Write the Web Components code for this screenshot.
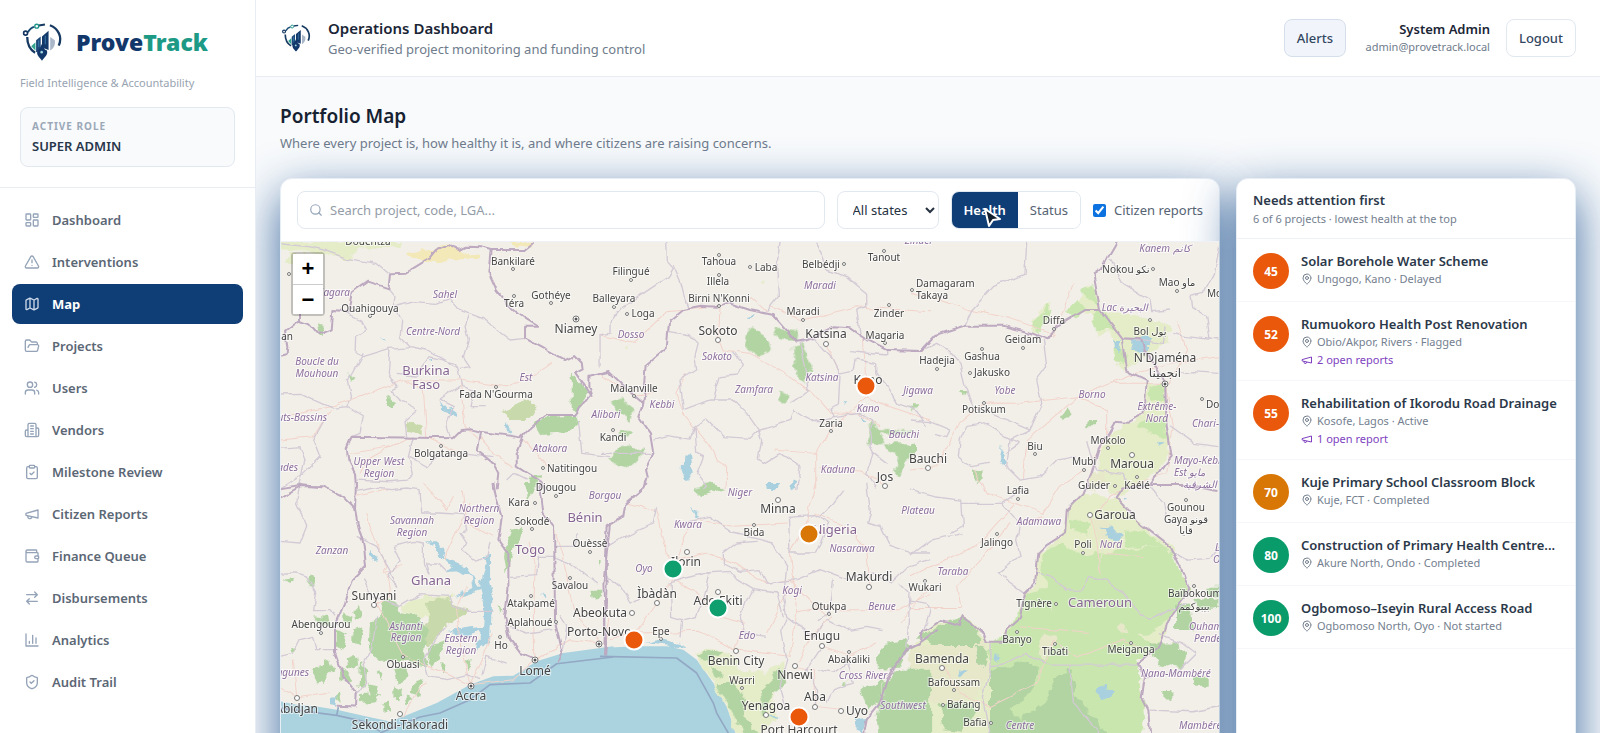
<!DOCTYPE html>
<html lang="en">
<head>
<meta charset="utf-8">
<title>ProveTrack – Portfolio Map</title>
<style>
  html, body { margin: 0; height: 100%; }
  body { font-family: "Noto Sans", "DejaVu Sans", sans-serif; font-size: 13px; color: #1e293b; background: #f8fafc; }
</style>
</head>
<body>
<pt-app></pt-app>

<script>
const ICONS = {
  dashboard: '<rect x="3" y="3" width="7" height="9" rx="1"/><rect x="14" y="3" width="7" height="5" rx="1"/><rect x="14" y="12" width="7" height="9" rx="1"/><rect x="3" y="16" width="7" height="5" rx="1"/>',
  alert: '<path d="m21.7 18-8-14a2 2 0 0 0-3.5 0l-8 14A2 2 0 0 0 4 21h16a2 2 0 0 0 1.7-3"/><path d="M12 9v4M12 17h.01"/>',
  map: '<path d="M14.1 5.6a2 2 0 0 0 1.8 0l3.7-1.9A1 1 0 0 1 21 4.6v12.8a1 1 0 0 1-.6.9l-4.5 2.2a2 2 0 0 1-1.8 0l-4.2-2.1a2 2 0 0 0-1.8 0l-3.7 1.9A1 1 0 0 1 3 19.4V6.6a1 1 0 0 1 .6-.9l4.5-2.2a2 2 0 0 1 1.8 0zM15 5.8v15M9 3.2v15"/>',
  folder: '<path d="m6 14 1.5-2.9A2 2 0 0 1 9.2 10H20a2 2 0 0 1 1.9 2.5l-1.5 6a2 2 0 0 1-2 1.5H4a2 2 0 0 1-2-2V5a2 2 0 0 1 2-2h3.9a2 2 0 0 1 1.7.9l.8 1.2a2 2 0 0 0 1.7.9H18a2 2 0 0 1 2 2v2"/>',
  users: '<path d="M16 21v-2a4 4 0 0 0-4-4H6a4 4 0 0 0-4 4v2"/><circle cx="9" cy="7" r="4"/><path d="M22 21v-2a4 4 0 0 0-3-3.9M16 3.1a4 4 0 0 1 0 7.8"/>',
  building: '<path d="M6 22V4a2 2 0 0 1 2-2h8a2 2 0 0 1 2 2v18zM6 12H4a2 2 0 0 0-2 2v6a2 2 0 0 0 2 2h2M18 9h2a2 2 0 0 1 2 2v9a2 2 0 0 1-2 2h-2M10 6h4M10 10h4M10 14h4M10 18h4"/>',
  clipboard: '<rect x="8" y="2" width="8" height="4" rx="1"/><path d="M16 4h2a2 2 0 0 1 2 2v14a2 2 0 0 1-2 2H6a2 2 0 0 1-2-2V6a2 2 0 0 1 2-2h2M9 14l2 2 4-4"/>',
  megaphone: '<path d="m3 11 18-5v12L3 14zM11.6 16.8a3 3 0 1 1-5.8-1.6"/>',
  wallet: '<path d="M19 7V4a1 1 0 0 0-1-1H5a2 2 0 0 0 0 4h15a1 1 0 0 1 1 1v4h-3a2 2 0 0 0 0 4h3a1 1 0 0 0 1-1v-2a1 1 0 0 0-1-1M3 5v14a2 2 0 0 0 2 2h15a1 1 0 0 0 1-1v-4"/>',
  swap: '<path d="m16 3 4 4-4 4M20 7H4M8 21l-4-4 4-4M4 17h16"/>',
  chart: '<path d="M3 3v18h18M18 17V9M13 17V5M8 17v-3"/>',
  shield: '<path d="M20 13c0 5-3.500 7.500-7.700 9a1 1 0 0 1-.7 0C7.500 20.500 4 18 4 13V6a1 1 0 0 1 1-1c2 0 4.500-1.200 6.200-2.700a1.200 1.200 0 0 1 1.500 0C14.500 3.800 17 5 19 5a1 1 0 0 1 1 1zM9 12l2 2 4-4"/>',
  search: '<circle cx="11" cy="11" r="8"/><path d="m21 21-4.300-4.300"/>',
  pin: '<path d="M20 10c0 5-5.500 10.200-7.400 11.800a1 1 0 0 1-1.200 0C9.500 20.200 4 15 4 10a8 8 0 0 1 16 0"/><circle cx="12" cy="10" r="3"/>'
};

function define(name, html, setup) {
  const template = document.createElement('template');
  template.innerHTML = html;
  customElements.define(name, class extends HTMLElement {
    connectedCallback() {
      if (this.shadowRoot) return;
      this.attachShadow({ mode: 'open' }).append(template.content.cloneNode(true));
      if (setup) setup(this, this.shadowRoot);
    }
  });
}

define('pt-icon', `
  <style>
    :host { display: inline-flex; flex: none; width: 16px; height: 16px; }
    svg { width: 100%; height: 100%; fill: none; stroke: currentColor; stroke-width: 2; stroke-linecap: round; stroke-linejoin: round; }
  </style>
  <svg viewBox="0 0 24 24" aria-hidden="true"></svg>`,
  (host, root) => { root.querySelector('svg').innerHTML = ICONS[host.getAttribute('name')]; });

define('pt-mark', `
  <style>:host { display: block; flex: none; } svg { display: block; width: 100%; height: 100%; }</style>
  <svg viewBox="60 62 134 130" fill="none" aria-hidden="true">
    <path d="M82 112C82 134 90 150 106 160" stroke="#173a63" stroke-width="7"/>
    <path d="M84 97C92 84 98 82 104 81" stroke="#1c4d74" stroke-width="6"/>
    <path d="M117 77L136 74" stroke="#173a63" stroke-width="6"/>
    <path d="M151 76C177 86 190 112 178 138" stroke="#173a63" stroke-width="7"/>
    <circle cx="77" cy="100" r="6" fill="#fff" stroke="#12365f" stroke-width="5"/>
    <circle cx="111" cy="79" r="6" fill="#fff" stroke="#1d9488" stroke-width="4"/>
    <path d="M94 140L107 128V153Z" fill="#2fa58f"/>
    <path d="M109 122L123 110V152L109 158Z" fill="#1d4a7a"/>
    <path d="M127 110L147 93V151L127 144Z" fill="#14396b"/>
    <path d="M152 112L166 122C168 134 164 146 152 153Z" fill="#a9b7c8"/>
    <path d="M127 184C118 172 109 167 113 153C121 149 122 140 127 132C132 140 132 149 142 153C146 166 136 172 127 184Z" fill="#12386b"/>
    <circle cx="126" cy="158" r="4" fill="#9fd3de"/>
    <path d="M137 108V134M117 122V142" stroke="#3b7cae" stroke-width="3"/>
  </svg>`);

define('pt-nav-item', `
  <style>
    :host { display: block; }
    a { display: flex; align-items: center; gap: 12px; height: 40px; padding: 0 12px; box-sizing: border-box; border-radius: 8px;
        color: #5b6775; font-weight: 600; text-decoration: none; }
    pt-icon { color: #94a3b8; }
    :host([active]) a { background: #0f3d75; color: #fff; font-weight: 700; }
    :host([active]) pt-icon { color: #cbd9ea; }
  </style>
  <a href="#"><slot></slot></a>`,
  (host, root) => {
    const link = root.querySelector('a');
    link.insertAdjacentHTML('afterbegin', `<pt-icon name="${host.getAttribute('icon')}"></pt-icon>`);
    if (host.hasAttribute('active')) link.setAttribute('aria-current', 'page');
  });

define('pt-sidebar', `
  <style>
    :host { display: block; position: relative; z-index: 2; background: #fff; border-right: 1px solid #e8edf3; }
    .top { padding: 20px; border-bottom: 1px solid #e8edf3; }
    .brand { display: flex; align-items: center; gap: 12px; height: 44px; }
    pt-mark { width: 44px; height: 44px; }
    .name { font-size: 23px; font-weight: 900; color: #12386b; }
    .name span { color: #1d9a86; }
    .tag { margin: 9px 0 14px; font-size: 11px; line-height: 20px; color: #98a3b1; white-space: nowrap; }
    .role { display: grid; gap: 4px; padding: 11px; border: 1px solid #e2e8f0; border-radius: 8px; background: #f8fafc; }
    .role small { font-size: 10px; line-height: 14px; font-weight: 700; letter-spacing: 1px; color: #9ba8b8; }
    .role b { font-size: 13px; line-height: 18px; font-weight: 600; color: #27364a; }
    nav { display: grid; gap: 2px; padding: 12px; }
  </style>
  <div class="top">
    <div class="brand"><pt-mark></pt-mark><div class="name">Prove<span>Track</span></div></div>
    <p class="tag">Field Intelligence &amp; Accountability</p>
    <div class="role"><small>ACTIVE ROLE</small><b>SUPER ADMIN</b></div>
  </div>
  <nav><slot></slot></nav>`);

define('pt-topbar', `
  <style>
    :host { display: flex; align-items: center; gap: 16px; height: 77px; padding: 0 24px; box-sizing: border-box;
            position: relative; z-index: 1; background: #fff; border-bottom: 1px solid #e8edf3; }
    pt-mark { width: 32px; height: 32px; }
    .title { flex: 1; }
    h1 { margin: 0; font-size: 15px; line-height: 22px; font-weight: 600; color: #1a2536; }
    p { margin: 0; font-size: 13px; line-height: 20px; color: #6f7c8c; }
    .user { min-width: 128px; text-align: right; }
    .user b { display: block; line-height: 18px; font-weight: 600; color: #1a2536; }
    .user span { display: block; font-size: 11px; line-height: 18px; color: #6f7c8c; }
    button { height: 38px; padding: 0 12px; border: 1px solid #e2e8f0; border-radius: 8px; background: #fff; font: inherit; font-weight: 500; color: #33475f; }
    .alerts { background: #f1f5fb; border-color: #d5dfeb; }
  </style>
  <pt-mark></pt-mark>
  <div class="title"><h1>Operations Dashboard</h1><p>Geo-verified project monitoring and funding control</p></div>
  <button class="alerts" type="button">Alerts</button>
  <div class="user"><b>System Admin</b><span>admin@provetrack.local</span></div>
  <button type="button">Logout</button>`);

define('pt-toolbar', `
  <style>
    :host { display: flex; align-items: center; gap: 12px; padding: 12px 16px; }
    .search { position: relative; flex: 1; display: flex; }
    .search pt-icon { position: absolute; left: 12px; top: 12px; width: 14px; height: 14px; color: #94a3b8; }
    input[type=search], select { font: inherit; height: 38px; box-sizing: border-box; border: 1px solid #e2e8f0; border-radius: 8px; background: #fff; }
    input[type=search] { width: 100%; padding: 0 12px 0 32px; }
    input::placeholder { color: #949ca8; }
    select { width: 102px; padding: 0 0 0 11px; color: #26323f; }
    .seg { display: flex; border: 1px solid #e2e8f0; border-radius: 8px; overflow: hidden; }
    .seg button { height: 36px; padding: 0 12px; border: 0; background: #fff; font: inherit; color: #566373; }
    .seg button[aria-pressed=true] { position: relative; background: #0f3d75; color: #fff; font-weight: 600; }
    .cursor { position: absolute; left: 32px; top: 16px; width: 17px; height: 20px; }
    label { display: flex; align-items: center; gap: 8px; color: #566373; white-space: nowrap; }
    label input { width: 13px; height: 13px; margin: 0; accent-color: #0b72e0; }
  </style>
  <div class="search"><pt-icon name="search"></pt-icon><input type="search" aria-label="Search projects" placeholder="Search project, code, LGA..."></div>
  <select aria-label="State"><option>All states</option></select>
  <div class="seg">
    <button type="button" aria-pressed="true">Health<svg class="cursor" viewBox="0 0 17 20" aria-hidden="true"><path d="M1 1L5 18L9 12L16 11Z" fill="#15202e" stroke="#fff" stroke-width="2" stroke-linejoin="round"/></svg></button>
    <button type="button" aria-pressed="false">Status</button>
  </div>
  <label><input type="checkbox" checked>Citizen reports</label>`);

/* Place names: kind, x, baseline y, text, anchor (m = middle, s = start, e = end).
   t = town, c = city, r = region, n = country. */
const PLACES = `t|232|23|Bankilaré
t|270|57|Gothéye
t|233|65|Téra
c|295|91|Niamey
t|89|70|Ouahigouya
r|164|56|Sahel
r|152|93|Centre-Nord
r|36|123|Boucle du
r|36|135|Mouhoun
n|145|133|Burkina
n|145|147|Faso
r|245|139|Est
t|215|156|Fada N'Gourma
r|46|179|Hauts-Bassins|e
r|69|54|Bandiagara|e
t|87|3|Douentza
t|12|98|San|e
r|325|176|Alibori
t|332|199|Kandi
t|160|215|Bolgatanga
r|98|223|Upper West
r|98|235|Region
r|269|210|Atakora
t|291|230|Natitingou
t|275|249|Djougou
r|17|229|Cascades|e
t|333|60|Balleyara
r|324|257|Borgou
t|238|264|Kara
t|251|283|Sokodé
r|198|270|Northern
r|198|282|Region
r|131|282|Savannah
r|131|294|Region
n|304|280|Bénin
n|249|312|Togo
t|309|305|Ouèssè
r|51|312|Zanzan
n|150|343|Ghana
t|289|347|Savalou
c|93|358|Sunyani
t|250|365|Atakpamé
c|319|375|Abeokuta
t|249|384|Aplahoué
c|286|394|Porto-Novo|s
t|40|386|Abengourou
r|125|388|Ashanti
r|125|399|Region
r|180|400|Eastern
r|180|412|Region
t|220|407|Ho
t|122|426|Obuasi
c|254|433|Lomé
r|28|434|Lagunes|e
c|190|458|Accra
c|37|471|Abidjan|e
c|119|487|Sekondi-Takoradi
t|350|33|Filingué
t|438|23|Tahoua
t|485|29|Laba
t|437|43|Illela
t|438|60|Birni N'Konni
t|362|75|Loga
t|540|26|Belbédji
t|603|19|Tanout
r|539|47|Maradi
t|522|73|Maradi
t|608|75|Zinder
r|638|2|Zinder
t|635|45|Damagaram|s
t|635|57|Takaya|s
r|350|96|Dosso
c|437|93|Sokoto
c|545|96|Katsina
t|604|97|Magaria
r|436|118|Sokoto
t|353|150|Malanville
r|381|166|Kebbi
r|473|151|Zamfara
r|541|139|Katsina
c|587|142|Kano
r|587|170|Kano
r|637|152|Jigawa
t|550|185|Zaria
r|623|196|Bauchi
c|647|221|Bauchi
r|557|231|Kaduna
c|604|239|Jos
t|656|122|Hadejia
r|459|254|Niger
c|497|271|Minna
r|637|272|Plateau
r|407|286|Kwara
t|473|294|Bida
n|576|292|Nigeria|e
r|571|310|Nasarawa
c|420|324|Ilorin|e
r|363|330|Oyo
c|376|356|Ìbàdàn
c|588|339|Makurdi
t|644|349|Wukari
r|511|352|Kogi
c|437|363|Ado Ekiti
t|548|368|Otukpa
r|601|368|Benue
t|380|393|Epe
r|466|397|Edo
c|541|398|Enugu
c|455|423|Benin City
t|568|421|Abakaliki
t|461|442|Warri
c|514|437|Nnewi
r|582|437|Cross River
c|534|459|Aba
c|485|468|Yenagoa
c|576|473|Uyo
c|518|492|Port Harcourt
r|622|467|Southwest
c|661|421|Bamenda
r|884|10|Kanem كانم
t|845|31|Nokou نكو
t|896|44|Mao ماو
t|926|55|Moussoro|s
r|844|69|Lac البحيرة
t|773|82|Diffa
t|869|93|Bol بول
t|742|101|Geidam
c|884|120|N'Djaména
c|884|135|انجمينا
t|701|118|Gashua
t|711|134|Jakusko
r|724|152|Yobe
r|811|156|Borno
t|703|171|Potiskum
r|876|168|Extrême-
r|876|180|Nord
t|925|166|Dourbali|s
r|911|185|Chari-|s
t|827|202|Mokolo
t|754|208|Biu
c|851|226|Maroua
t|803|223|Mubi
r|893|222|Mayo-Kebbi|s
r|893|234|Est مايو|s
r|919|246|الشرقية
t|813|247|Guider
t|856|247|Kaélé
t|737|252|Lafia
t|905|269|Gounou
t|905|281|Gaya قونو
t|905|292|قايا
c|834|277|Garoua
r|758|283|Adamawa
t|716|304|Jalingo
t|802|306|Poli
r|830|306|Nord
r|934|309|Logone|s
r|932|321|Oriental|s
r|672|333|Taraba
t|753|365|Tignère
n|819|365|Cameroun
t|887|355|Baïbokoum|s
t|913|368|بيبوكمم
r|908|388|Ouham-|s
r|913|400|Pendé|s
t|736|401|Banyo
t|774|413|Tibati
t|850|411|Meiganga
r|860|435|Nana-Mambéré|s
t|673|444|Bafoussam
t|666|466|Bafang|s
t|694|484|Bafia
r|739|487|Centre
r|898|487|Mambéré|s`.split('\n').map(row => row.split('|'));

const TOWNS = '232,27 270,61 233,54 89,74 215,145 332,188 160,204 262,226 275,254 333,65 254,261 251,287 309,310 289,336 250,354 275,380 40,391 219,395 122,415 350,38 438,13 469,25 438,33 438,64 346,72 563,22 603,9 522,78 608,63 631,48 604,101 353,154 550,189 656,127 473,283 644,339 548,372 380,397 568,410 461,446 872,27 896,49 773,87 869,78 742,106 701,107 689,131 703,161 921,157 827,206 754,212 803,228 834,244 856,235 737,257 905,258 716,292 802,311 775,362 913,344 736,390 774,402 850,401 673,448 662,463 710,481 8,32';
const CITIES = '93,363 351,371 16,456 119,472 437,98 545,102 647,226 604,244 497,258 406,310 376,361 588,345 437,350 541,404 455,409 514,424 534,465 485,473 560,469 661,426 851,213 809,273';
const CAPITALS = '295,77 318,402 254,418 190,444 884,142';
const PINS = [[585, 144, '#ea580c'], [528, 292, '#d97706'], [392, 327, '#0f9f6e'], [437, 366, '#0f9f6e'], [353, 398, '#ea580c'], [518, 475, '#ea580c']];

/* Map sheets are drawn at three units to the pixel. "at" is the sheet's origin on the map. */
const SHEETS = [
  { at: [-1, -2],
    yellow: 'M380 45L430 30L500 20L560 45L600 40L600 60L450 62L400 60ZM690 5L760 5L750 20L690 15Z',
    pale: 'M0 5L360 5L350 25L230 22L215 60L130 45L40 30L0 28ZM30 35L70 45L50 75L20 70Z',
    wood: 'M875 400L905 430L928 465L890 515L875 500ZM760 550L800 530L890 527L895 550L860 580L780 585ZM105 250L130 260L125 285L110 285ZM205 400L230 410L215 425ZM755 710L780 705L775 735L755 730ZM325 470L345 480L340 505L330 500Z',
    olive: 'M670 510L750 475L770 500L740 540L690 540ZM375 560L400 548L425 560L425 585L380 575Z',
    water: 'M485 485L500 505L515 500L525 525L510 520L495 515ZM675 545L695 575L680 570ZM305 290L318 305L310 302ZM440 350L455 360L445 372Z',
    minor: 'M0 12L90 20L130 30L200 55L290 70L325 100M325 145L345 170L340 200L365 240L360 290L390 320L440 330L510 370L530 380M190 215L245 240L260 270L230 290L228 340L250 350L330 325L390 320M345 200L400 185L470 190L510 175L535 205L570 220L555 260L565 300L550 350L570 380L540 385M570 220L610 235L650 270L690 300L735 295M250 340L205 420L215 470L200 500L160 505L60 460L0 462M330 325L325 400L350 440L330 450L360 480L415 510L375 545L380 590M350 400L410 405L450 350L500 365L530 370L545 440L580 450L570 500L620 500M540 440L480 480L520 500L500 550L510 590M200 500L250 530L240 580L215 590M130 545L100 600L120 650L70 700L0 745M0 625L60 620L75 660L55 740M400 590L385 650L400 700L380 720M385 650L440 680L470 650L560 640L640 650M895 540L905 640L990 650M680 720L700 700L740 720M960 285L960 380M230 720L330 725L380 720',
    road: 'M10 530L150 500L240 470L370 420L540 420L680 440L770 400L815 370M370 420L430 450L440 590L540 640M540 420L555 560L600 600M210 640L330 620L400 590M240 700L260 660L350 610M600 590L640 640L700 680M730 600L770 640L800 680M0 600L100 590L150 510',
    nation: 'M760 5L730 30L632 30L605 22L560 20L540 30L505 15L470 30L450 55L380 98L330 100L325 145L265 125L215 160L205 215L160 210L155 268L115 285L85 250L60 240M60 200L60 240L15 275L22 320L20 345L0 350M632 30L625 95L650 150L690 200L735 235L775 260L735 260L735 295L800 330L855 360L885 345L905 365L908 388L885 400L930 465L885 525L800 525L770 548L735 580L725 592L600 575L570 568L545 570L520 595L215 590L200 625L205 660L225 700L228 745M730 590L710 640L710 680L780 725L800 750M600 575L590 630L640 670L655 700L650 745M990 395L925 410L925 440L935 470M0 745L60 735L130 742' },
  { at: [-1, 241],
    sea: 'M0 655L50 665L110 670L170 680L260 700L330 715L370 700L470 660L570 605L640 580L700 578L770 535L850 510L1000 490L1000 1300L0 1300Z',
    pale: 'M360 370L430 340L520 340L490 400L420 400L380 390ZM440 390L470 380L480 410L455 420Z',
    olive: 'M440 360L510 340L520 365L565 380L550 400L500 420L470 460L440 500L400 440L450 420Z',
    wood: 'M300 360L340 355L365 390L420 400L450 440L430 500L440 550L360 530L300 530L265 500L270 420L310 390ZM190 385L215 395L210 430L190 420ZM220 375L240 370L245 400L225 410ZM170 440L200 450L190 500L170 480ZM220 440L250 430L240 490L220 480ZM200 520L230 510L235 550L205 560ZM240 540L260 560L250 620L235 610ZM180 560L210 570L205 600L185 590ZM100 550L150 535L160 560L120 605L105 590ZM90 275L110 285L105 315L80 300ZM10 290L40 285L35 300ZM265 600L290 610L280 650L260 630ZM340 560L370 550L380 580L350 600ZM290 560L310 570L305 600ZM400 600L425 590L410 640L395 630ZM340 610L370 620L360 650L340 640ZM240 640L300 630L290 655L240 660ZM450 490L500 470L470 520L460 550L440 540ZM480 530L500 550L490 570ZM555 530L575 540L560 560ZM690 140L730 135L720 170L700 200L690 240L680 270L672 215ZM735 0L770 0L740 50ZM930 320L970 320L965 340L935 345ZM650 370L665 380L655 395ZM100 400L145 405L150 425L110 415ZM950 230L960 232L955 245ZM165 640L180 630L185 660ZM310 660L330 655L330 680L310 690ZM380 640L400 650L385 670ZM30 490L45 495L35 510ZM60 430L80 425L70 440Z',
    water: 'M435 175L470 175L500 200L495 225L520 235L560 250L590 290L600 315L605 285L620 240L610 220L630 215L630 290L638 330L630 470L610 490L590 505L600 440L560 455L500 440L540 438L595 430L612 425L618 370L600 325L520 345L580 315L575 275L530 262L490 265L515 248L480 215L465 190ZM268 195L295 235L280 238L270 220ZM150 640L170 640L165 665L150 660ZM780 330L800 345L790 348Z',
    minor: 'M230 25L280 15L330 20L380 15L420 20L425 90L480 90L550 95L560 140L540 150L560 180L550 200L590 235L620 220L630 180M60 0L50 60L80 130L60 180L0 175M0 270L50 270L80 280L110 330L100 380L150 380L165 400M230 160L290 190L330 260L350 310L325 280L330 270L360 240L340 190L400 175L430 180L430 240L450 270L440 240L470 240L500 270M250 290L280 340L360 370L420 335L510 340L520 370L565 385L640 385M505 420L470 460L430 530L445 580L500 590L560 575M290 400L275 500L250 540L260 600L230 640M0 520L40 510L60 470L100 460L110 500L170 500M690 280L770 275L775 220L820 220M820 190L880 190L895 150M820 220L870 240L950 300M690 430L740 450L820 440M840 400L860 430L850 500M605 580L620 520L680 540M560 575L600 590',
    road: 'M260 90L270 130L320 250L310 270L370 250M230 40L320 20M280 370L330 340L320 270M570 605L540 480L530 380L560 310M570 605L470 560L370 520M570 605L620 500L640 450M370 700L420 610L440 600M765 530L760 400L765 260L750 180M765 530L870 470L960 480M960 480L880 380L850 230L820 130M570 605L700 590L765 530M0 610L50 645L40 530M50 645L150 630M430 0L500 80L520 40M640 160L560 120L550 20M980 470L990 400M370 520L290 360M490 230L570 60',
    nation: 'M0 45L60 10L130 10L190 40L225 75L235 130L250 180L258 245L215 290L195 360L165 430L165 510L190 580L230 630L228 670L170 668M228 0L225 75M640 0L650 50L665 100L655 170L685 210L685 320L675 400L690 470L720 510L765 530M780 0L790 90L822 130L825 420L845 500L830 540M990 120L970 300L978 480L975 520',
    sealine: 'M175 672L170 697L0 675M170 697L250 715L300 745M300 750L420 702L480 690L570 650L630 605L750 600L830 542L1000 522' },
  { at: [319, -2],
    wood: 'M430 280L460 265L500 290L515 330L480 348L440 330ZM520 262L590 270L585 300L540 295ZM575 320L610 310L635 380L615 430L585 400ZM540 455L565 465L560 488L535 475ZM35 490L70 475L100 510L95 540L60 520ZM60 570L95 575L80 590L60 585ZM25 650L60 625L130 620L120 660L80 685L30 665ZM290 740L340 730L370 750L290 750ZM815 545L835 560L850 610L800 610ZM850 610L930 610L945 650L910 680L900 710L885 700L890 650ZM830 570L940 570L930 580L850 585ZM920 505L945 495L940 510Z',
    pale: 'M480 125L495 110L495 125ZM65 325L80 320L78 332Z',
    water: 'M250 640L270 640L275 700L260 725L248 690ZM500 735L540 730L520 750L500 750ZM575 715L585 720L580 750L572 740ZM440 235L468 228L455 238ZM780 528L805 540L790 540ZM725 490L738 485L732 498Z',
    minor: 'M200 5L202 65L220 85L205 110L130 160L70 200L30 250L30 280L0 285M220 75L240 120L250 160L265 210M540 5L530 80L535 170L500 215M650 5L680 90L740 110L800 160L800 200L770 210L780 280M207 275L270 285L295 310L285 350L290 390L240 420L250 510L330 480L400 480L440 520L475 570L520 560L570 540L580 510L610 530L640 545M400 335L430 370L415 405L360 410L340 480M570 490L600 470L625 450L600 310M600 310L640 295M640 295L700 360L720 400L715 495L690 510L700 530L780 520M715 400L760 390L765 360L830 370L830 395L855 430L890 490L950 510L980 560M750 335L860 345L860 330M160 600L200 590L270 600L285 560L320 540L370 590L450 595L475 570M285 560L290 640L310 650L290 700L320 740L310 750M475 570L485 600L475 660L490 670L540 640L600 680L590 750M700 530L640 545L660 545M780 520L815 540L810 620L820 640L860 670M0 640L160 640M820 640L800 700L830 745',
    road: 'M355 300L370 330L450 340L560 400L630 450L690 520L770 520L840 560M355 300L360 200M510 200L610 240L770 200L990 215M260 400L230 460L250 520L330 620L350 660L380 680L378 750M690 570L650 640L650 750M690 570L800 470L870 500L990 540M798 438L790 290M660 680L780 690L860 740M0 400L100 465L160 460M650 640L520 630M0 285L100 310L200 215L350 200M500 215L450 170M680 320L720 400',
    nation: 'M0 400L25 393L100 465L130 490L115 530L150 580L160 640L135 690L140 710L130 745L75 790M130 490L140 375L200 325L207 245L250 210L300 200L350 203L390 190L450 210L520 225L590 305L620 300L700 262L750 265L800 300L860 330L965 333L990 300' },
  { at: [319, 241],
    sea: 'M0 495L110 490L200 490L250 500L290 530L340 600L380 670L410 760L410 1300L0 1300Z',
    pale: 'M280 510L340 495L400 520L420 560L500 570L560 530L550 600L520 650L530 700L480 760L410 760L380 670L340 600Z',
    wood: 'M285 515L340 498L370 510L330 540L310 535ZM350 600L400 600L430 640L440 720L480 760L430 750L400 690ZM480 620L540 560L560 570L545 620L510 650L490 700ZM830 520L850 480L910 470L930 490L900 550L830 560ZM780 620L850 590L840 650L800 680ZM850 600L900 560L990 560L990 900L850 900L830 700ZM285 15L340 0L365 15L310 40ZM730 600L745 590L740 610ZM330 540L370 580L345 590ZM950 470L990 440L990 470Z',
    water: 'M130 480L180 470L240 480L260 495L180 485ZM500 0L540 0L520 25L500 15ZM270 70L295 100L285 105ZM760 710L800 700L785 745L770 740ZM500 690L540 700L520 704Z',
    minor: 'M20 190L100 150L160 120L170 70M230 120L330 100L400 150L480 170L520 180L560 250L550 340L560 400L545 440L560 530M20 280L60 310L90 360L170 330M370 210L410 180L470 175M370 210L370 240L420 265L480 260L500 300L590 290M560 100L640 95L690 120L650 210L570 210L565 100M590 290L660 260L740 290L820 270L870 300L920 250L990 230M205 300L240 290L320 270L390 265L410 290M210 300L215 400L245 410L240 460M330 270L310 350L290 400L250 410M410 290L460 320L420 400L430 450L500 460M460 320L530 330L550 400M730 20L700 60L660 100M800 0L810 80L800 120L840 130L870 190L930 210L990 210M560 400L640 460L680 410L740 440L800 430L850 440M700 290L690 390L650 410M660 500L620 560L650 620L640 680M650 560L700 570L740 540L760 600L700 620L680 660M560 530L540 610L560 680M920 500L930 330L900 300',
    road: 'M105 450L170 360L215 290L250 170L290 110M105 450L300 445L405 500L570 520L590 390L580 280L570 210L620 110L650 0M405 500L430 420L350 400L280 320L215 290M80 60L170 80L180 120L210 250M400 240L500 300L570 290L660 380L680 400M570 300L500 450M300 110L400 130L560 120M585 550L640 450L700 400M645 670L640 560L585 550M700 380L900 380L990 330M810 310L800 200L740 130L640 90M650 670L730 680M660 490L750 520L830 480M240 230L320 210L400 240M900 420L990 300M30 470L105 450M590 390L700 370',
    nation: 'M140 0L130 15L75 65L70 100L20 130L15 220L20 300L12 520M1010 440L965 475L920 500L860 590L840 660L800 710L790 760',
    sealine: 'M0 520L230 525L290 570L340 660L350 690L385 750' },
  { at: [629, -2],
    pale: 'M360 250L400 200L425 195L400 260L370 280ZM470 220L515 170L525 140L560 140L570 210L600 280L570 290L540 220L500 215ZM575 210L700 230L780 260L780 300L640 400L610 350L610 300ZM710 425L765 440L768 560L640 570L700 520ZM650 550L770 560L780 640L740 700L620 775L560 700L565 640L610 580ZM520 760L620 775L690 850L780 920L838 1050L780 1130L745 1220L680 1270L700 1400L720 1900L-10 1900L0 1220L30 1210L40 1175L95 1140L150 1155L155 1125L222 1180L230 1205L280 1205L290 1165L330 1130L345 1060L375 1030L385 940L410 915L465 880L470 810Z',
    light: 'M400 930L460 910L520 950L640 930L760 920L800 960L838 1050L780 1130L720 1180L600 1170L520 1110L430 1060L390 1000ZM510 150L550 135L570 200L540 180ZM545 220L580 210L620 270L560 270ZM470 210L500 180L530 205L500 235ZM360 260L410 195L425 210L390 280ZM620 300L650 350L640 370L610 360ZM715 440L750 430L765 480L720 490ZM680 560L700 540L770 545L765 600L740 580ZM350 1060L420 1040L560 1130L680 1180L740 1220L680 1270L700 1400L720 1900L240 1900L240 1210L300 1170ZM480 840L540 850L530 880L480 870ZM640 870L720 880L760 920L650 920Z',
    sand: 'M0 1230L60 1215L220 1200L240 1290L200 1370L100 1400L0 1360ZM410 1260L440 1190L400 1180L380 1240ZM560 1000L575 920L550 840L580 820L600 850L580 920ZM550 690L590 700L560 760L530 740ZM400 1080L440 1130L420 1100ZM620 1170L640 1150L650 1180Z',
    wood: 'M40 1190L100 1150L160 1130L220 1190L200 1215L60 1215ZM0 1290L50 1300L60 1350L20 1400L60 1450L50 1900L-10 1900ZM240 1300L340 1260L390 1290L360 1360L300 1400L330 1440L410 1380L430 1320L480 1290L500 1370L560 1440L600 1500L600 1900L240 1900ZM190 1220L240 1230L220 1290L200 1260ZM90 1400L150 1380L200 1410L160 1479L100 1470ZM470 500L485 520L465 540L450 530ZM535 540L555 540L555 556L535 556ZM150 450L172 450L165 470ZM190 690L220 695L205 730L195 710ZM795 1100L840 1090L850 1170L795 1170ZM720 1210L800 1210L825 1240L820 1285L740 1270ZM855 1310L890 1310L890 1340L855 1340ZM760 1350L790 1350L790 1378L760 1378ZM895 1040L925 1040L925 1070L895 1070ZM850 1080L925 1075L925 1100L860 1110ZM0 610L15 615L15 640L0 640ZM0 490L20 490L8 505Z',
    water: 'M610 300L635 300L630 340L612 330ZM660 300L720 285L720 330L690 340L665 325ZM575 860L600 860L635 885L625 905L590 890ZM275 620L285 650L278 675L270 660ZM740 605L765 615L750 622ZM140 1290L165 1295L150 1312ZM555 1350L590 1330L610 1360L570 1380ZM255 1240L270 1240L262 1270ZM640 775L655 778L645 782Z',
    minor: 'M350 5L345 100L250 140L185 210L165 255M925 20L910 100L880 160L840 170L845 200L890 230L900 300M600 60L640 130L720 180L725 215L780 210M30 333L80 310L115 330L150 370L165 440L190 500L300 545L360 570L395 490L380 420L410 380L400 300M0 540L60 545L120 570L110 590L75 580M170 560L150 600L145 650L180 680L240 670M285 640L330 610L300 600L360 570M170 560L230 550L300 600L290 680L330 720L390 710L440 660L500 650M0 750L70 770L155 780L160 860L120 880M155 790L275 790L335 750M275 790L330 850L320 900L330 950L265 1000L290 1020L345 1060M160 880L60 900L0 945M385 1000L430 1010L470 1050L520 1050L540 1010L590 1020L640 1060L690 1120L720 1135L830 1090M240 1205L240 1280L280 1275L350 1240L420 1275L680 1275M240 1280L220 1370L240 1479M480 1280L490 1390L570 1479M560 690L640 700L650 740M810 400L850 395L925 400M780 560L850 610L925 620M720 740L760 790L770 830M780 930L830 960L900 955L925 920M745 1180L820 1210L860 1240L800 1300L710 1310M720 1410L850 1415L925 1400M530 600L540 640L560 690M0 1080L50 1090L60 1110L30 1210M790 280L830 290L925 300M640 295L760 310L765 260',
    road: 'M0 160L90 180L180 210L300 235L440 285M222 489L330 490L500 470L600 430L660 405L780 370L925 350M500 470L590 510L590 600L540 670M222 489L150 550L80 680L0 690M430 290L440 260L490 130M340 720L350 600L420 540L500 470M190 690L230 760L320 790L400 820L450 740L520 690M320 790L260 850L200 920L100 960L0 1010M330 850L400 830M0 1105L150 1105L140 1040L230 940L300 850M540 820L560 900L570 1000M600 430L700 430L765 430L790 560L770 700L680 730L600 770L560 820M590 940L700 950M330 1160L430 1170L540 1180M780 430L830 330L800 240M430 1200L500 1250L640 1200L700 1230M100 1280L150 1360L240 1400L380 1330L430 1200',
    nation: 'M0 333L30 333L75 285L165 257L280 257L350 275L410 298L440 260L525 210L570 210L550 100L580 80L600 40L620 5M570 210L635 295L648 390L710 420L705 490L700 520L650 548L615 545L565 630L545 700L520 760L470 810L465 880L410 915L385 940L375 1030L345 1060L330 1130L290 1165L280 1205L230 1205L222 1180L185 1145L155 1125L150 1155L95 1140L40 1175L30 1210L0 1220M635 295L690 297L700 330L735 375L765 430L770 560L785 650L760 680L720 735L640 745L620 775L690 850L780 920L820 1000L838 1050L780 1130L745 1220L680 1270L705 1310L695 1370L715 1410L720 1479M720 735L830 735L925 750' }
];

define('pt-map', `
  <style>
    :host { display: block; position: relative; z-index: 0; overflow: hidden; background: #f2efe9; border-radius: 0 0 12px 12px; }
    svg { display: block; width: 100%; height: 100%; }
    path { fill: none; stroke: none; stroke-linejoin: round; }
    .sea { fill: #aad3df; }
    .pale { fill: #e5ecc8; }
    .light { fill: #c9e6ae; }
    .sand { fill: #e6e8c9; }
    .yellow { fill: #f3e8b8; }
    .olive { fill: #c8d9ab; }
    .wood { fill: #b2d4a3; }
    .water { fill: #a9d0de; }
    .road { stroke: #f2d3ca; stroke-width: 3; }
    .minor { stroke: #d3cad5; stroke-width: 4; }
    .nation { stroke: #bda9c0; stroke-width: 6; }
    .sealine { stroke: #93a8c4; stroke-width: 5; }
    text { font-size: 10px; fill: #444; text-anchor: middle; paint-order: stroke; stroke: rgba(255,255,255,.6); stroke-width: 2px; }
    .c { font-size: 12px; }
    .r { font-style: italic; fill: #8d6f9e; }
    .n { font-size: 13px; fill: #866592; }
    .s { text-anchor: start; }
    .e { text-anchor: end; }
    .dot { fill: #fff; stroke: #777; }
    .zoom { position: absolute; left: 10px; top: 10px; width: 34px; display: grid; border: 2px solid rgba(0,0,0,.2); border-radius: 4px; box-sizing: border-box; background-clip: padding-box; }
    .zoom button { height: 30px; padding: 0; border: 0; background: #fff; font: bold 22px/30px "Liberation Sans", sans-serif; color: #000; }
    .zoom button + button { border-top: 1px solid #ccc; }
  </style>
  <svg role="img" aria-label="Map of project locations">
    <defs>
      <filter id="shore" x="-5%" y="-5%" width="110%" height="110%"><feTurbulence type="fractalNoise" baseFrequency="0.09" numOctaves="3" seed="4"/><feDisplacementMap in="SourceGraphic" scale="10" xChannelSelector="R" yChannelSelector="G"/></filter>
      <filter id="wobble" x="-5%" y="-5%" width="110%" height="110%"><feTurbulence type="fractalNoise" baseFrequency="0.07" numOctaves="2" seed="9"/><feDisplacementMap in="SourceGraphic" scale="6" xChannelSelector="R" yChannelSelector="G"/></filter>
    </defs>
  </svg>
  <div class="zoom"><button type="button" aria-label="Zoom in">+</button><button type="button" aria-label="Zoom out">−</button></div>`,
  (host, root) => {
    const dots = (list, make) => list.split(' ').map(p => make(...p.split(','))).join('');
    const layer = (names, attrs) => `<g ${attrs}>` + names.map(name => SHEETS.filter(s => s[name]).map(s =>
      `<path class="${name}" transform="translate(${s.at}) scale(.3334)" d="${s[name]}"/>`).join('')).join('') + '</g>';
    root.querySelector('svg').insertAdjacentHTML('beforeend',
      layer(['sea'], '') +
      layer(['yellow', 'pale', 'light', 'sand', 'olive', 'wood', 'water'], 'filter="url(#shore)"') +
      layer(['road', 'minor', 'nation'], 'filter="url(#wobble)"') + layer(['sealine'], '') +
      dots(TOWNS, (x, y) => `<circle class="dot" cx="${x}" cy="${y}" r="1.500"/>`) +
      dots(CITIES, (x, y) => `<circle class="dot" cx="${x}" cy="${y}" r="2.500"/>`) +
      dots(CAPITALS, (x, y) => `<circle class="dot" cx="${x}" cy="${y}" r="3"/><circle cx="${x}" cy="${y}" r="1.500" fill="#555"/>`) +
      PLACES.map(([kind, x, y, name, anchor = 'm']) => `<text class="${kind} ${anchor}" x="${x}" y="${y}">${name}</text>`).join('') +
      PINS.map(([x, y, fill]) => `<circle cx="${x}" cy="${y}" r="9.500" fill="${fill}" stroke="#fff" stroke-width="2"/>`).join(''));
  });

define('pt-project', `
  <style>
    :host { display: flex; gap: 12px; padding: 12px 16px; border-bottom: 1px solid #f5f7fa; }
    .score { flex: none; width: 36px; height: 36px; margin-top: 2px; border-radius: 50%; display: grid; place-items: center; color: #fff; font-size: 12px; font-weight: 700; background: var(--score); }
    .text { min-width: 0; }
    .name { font-size: 13px; line-height: 20px; font-weight: 600; color: #2b3849; white-space: nowrap; overflow: hidden; text-overflow: ellipsis; }
    .line { display: flex; align-items: center; gap: 4px; font-size: 11px; line-height: 16px; color: #74808f; }
    .line pt-icon { width: 12px; height: 12px; }
    .reports { margin-top: 2px; color: #7e3fc0; }
  </style>
  <div class="score"></div>
  <div class="text">
    <div class="name"><slot></slot></div>
    <div class="line"><pt-icon name="pin"></pt-icon><span class="place"></span></div>
  </div>`,
  (host, root) => {
    const score = +host.getAttribute('score');
    host.style.setProperty('--score', score < 60 ? '#ea580c' : score < 80 ? '#d97706' : '#0a9b6b');
    root.querySelector('.score').textContent = score;
    root.querySelector('.place').textContent = host.getAttribute('place');
    if (host.hasAttribute('reports'))
      root.querySelector('.text').insertAdjacentHTML('beforeend', `<div class="line reports"><pt-icon name="megaphone"></pt-icon>${host.getAttribute('reports')}</div>`);
  });

define('pt-card', `
  <style>
    :host { display: flex; flex-direction: column; min-width: 0; box-sizing: border-box; border: 1px solid #e8eef5; border-radius: 12px; background: #fff;
            box-shadow: 0 16px 48px rgba(15, 70, 135, .8); }
  </style>
  <slot></slot>`);

define('pt-app', `
  <style>
    :host { display: grid; grid-template-columns: 256px minmax(0, 1fr); height: 100vh; overflow: hidden; }
    .page { min-width: 0; min-height: 0; display: flex; flex-direction: column; }
    main { flex: 1; min-height: 0; padding: 24px; overflow: auto; scrollbar-width: none; }
    h2 { margin: 0; font-size: 19px; line-height: 30px; font-weight: 600; color: #162131; }
    .lead { margin: 0 0 22px; line-height: 25px; color: #6f7c8c; }
    .grid { display: grid; grid-template-columns: minmax(0, 1fr) 340px; gap: 16px; }
    pt-map { flex: 1; min-height: 620px; border-top: 1px solid #eef2f6; }
    header { padding: 11px 16px 10px; border-bottom: 1px solid #eef2f6; }
    h3 { margin: 0; font-size: 13px; line-height: 20px; font-weight: 600; color: #2b3849; }
    header p { margin: 0; font-size: 11px; line-height: 18px; color: #74808f; }
  </style>
  <pt-sidebar>
    <pt-nav-item icon="dashboard">Dashboard</pt-nav-item>
    <pt-nav-item icon="alert">Interventions</pt-nav-item>
    <pt-nav-item icon="map" active>Map</pt-nav-item>
    <pt-nav-item icon="folder">Projects</pt-nav-item>
    <pt-nav-item icon="users">Users</pt-nav-item>
    <pt-nav-item icon="building">Vendors</pt-nav-item>
    <pt-nav-item icon="clipboard">Milestone Review</pt-nav-item>
    <pt-nav-item icon="megaphone">Citizen Reports</pt-nav-item>
    <pt-nav-item icon="wallet">Finance Queue</pt-nav-item>
    <pt-nav-item icon="swap">Disbursements</pt-nav-item>
    <pt-nav-item icon="chart">Analytics</pt-nav-item>
    <pt-nav-item icon="shield">Audit Trail</pt-nav-item>
  </pt-sidebar>
  <div class="page">
    <pt-topbar></pt-topbar>
    <main>
      <h2>Portfolio Map</h2>
      <p class="lead">Where every project is, how healthy it is, and where citizens are raising concerns.</p>
      <div class="grid">
        <pt-card><pt-toolbar></pt-toolbar><pt-map></pt-map></pt-card>
        <pt-card>
          <header><h3>Needs attention first</h3><p>6 of 6 projects · lowest health at the top</p></header>
          <pt-project score="45" place="Ungogo, Kano · Delayed">Solar Borehole Water Scheme</pt-project>
          <pt-project score="52" place="Obio/Akpor, Rivers · Flagged" reports="2 open reports">Rumuokoro Health Post Renovation</pt-project>
          <pt-project score="55" place="Kosofe, Lagos · Active" reports="1 open report">Rehabilitation of Ikorodu Road Drainage</pt-project>
          <pt-project score="70" place="Kuje, FCT · Completed">Kuje Primary School Classroom Block</pt-project>
          <pt-project score="80" place="Akure North, Ondo · Completed">Construction of Primary Health Centre...</pt-project>
          <pt-project score="100" place="Ogbomoso North, Oyo · Not started">Ogbomoso–Iseyin Rural Access Road</pt-project>
        </pt-card>
      </div>
    </main>
  </div>`);
</script>
</body>
</html>
